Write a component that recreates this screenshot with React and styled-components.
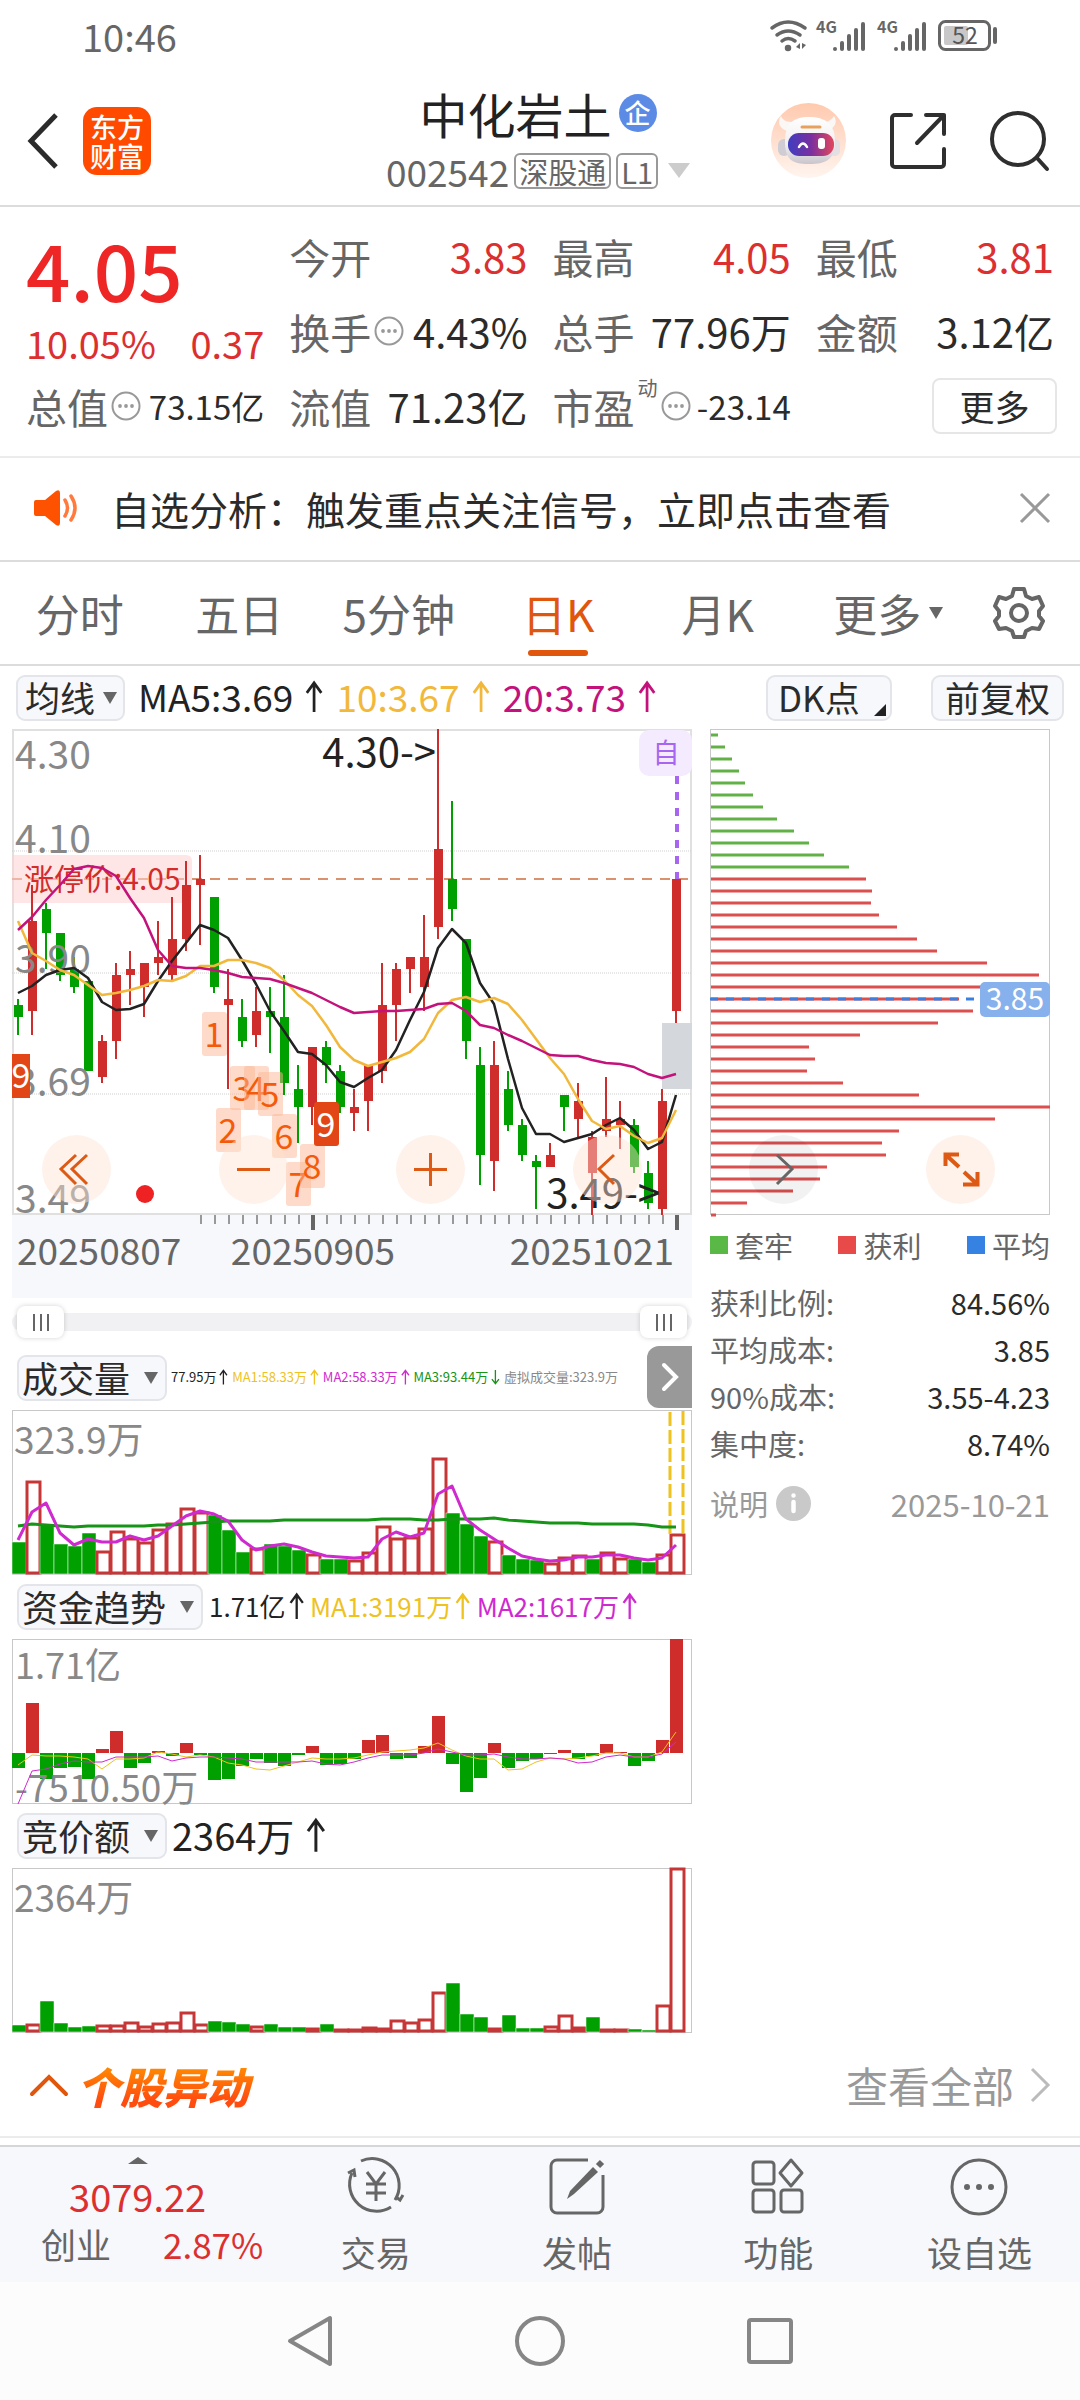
import React, { useState } from 'react';
import styled, { createGlobalStyle } from 'styled-components';

const RED = '#cf2c2c';
const GREEN = '#00a000';
const STEP = 14;
const FONT = '"Noto Sans CJK SC", "Noto Sans", sans-serif';

const GlobalStyle = createGlobalStyle`
  * { box-sizing: border-box; }
  body {
    margin: 0;
    background: #fff;
    color: #2b2b2b;
    font-family: ${FONT};
  }
  button, select, input { font-family: inherit; color: inherit; margin: 0; }
  button { border: 0; padding: 0; background: none; }
  svg { display: block; flex: none; overflow: visible; }
  a { color: inherit; text-decoration: none; }
`;

const Page = styled.div`
  min-height: 100vh;
  display: flex;
  flex-direction: column;
`;

/* ---------- status bar ---------- */

const StatusBar = styled.div`
  height: 74px;
  padding: 0 82px 2px;
  display: flex;
  align-items: center;
  justify-content: space-between;
  font-size: 38px;
  line-height: 40px;
  color: #666;
`;

const StatusIcons = styled.div`
  display: flex;
  gap: 8px;
`;

/* ---------- header ---------- */

const Header = styled.header`
  height: 133px;
  padding: 2px 30px 0 26px;
  display: grid;
  grid-template-columns: 1fr auto 1fr;
  align-items: center;
  border-bottom: 2px solid #dcdcdc;
`;

const HeaderSide = styled.div`
  display: flex;
  align-items: center;
  justify-content: ${(p) => (p.$end ? 'flex-end' : 'flex-start')};
  gap: ${(p) => (p.$end ? 43 : 24)}px;
`;

const Logo = styled.a`
  width: 68px;
  height: 68px;
  border-radius: 14px;
  background: #ff4a00;
  color: #fff;
  font-size: 27px;
  font-weight: 500;
  line-height: 29px;
  display: grid;
  place-content: center;
  text-align: center;
`;

const TitleBlock = styled.div`
  display: flex;
  flex-direction: column;
  align-items: center;
`;

const Title = styled.h1`
  margin: 0;
  display: flex;
  align-items: center;
  gap: 7px;
  font-size: 48px;
  font-weight: 400;
  line-height: 60px;
  color: #222;
`;

const Verified = styled.span`
  width: 38px;
  height: 38px;
  border-radius: 50%;
  background: #5c8be6;
  color: #fff;
  font-size: 26px;
  font-weight: 500;
  line-height: 36px;
  text-align: center;
`;

const CodeRow = styled.div`
  display: flex;
  align-items: center;
  gap: 5px;
  font-size: 37px;
  line-height: 56px;
  color: #666;
`;

const Badge = styled.span`
  border: 2px solid #999;
  border-radius: 6px;
  padding: 0 3px;
  font-size: 29px;
  line-height: 32px;
`;

const Caret = styled.span`
  width: 0;
  height: 0;
  border-left: ${(p) => p.$w || 7}px solid transparent;
  border-right: ${(p) => p.$w || 7}px solid transparent;
  ${(p) => (p.$up ? 'border-bottom' : 'border-top')}: ${(p) => p.$h || 12}px solid ${(p) => p.$color || '#666'};
`;

/* ---------- quote ---------- */

const Quote = styled.section`
  padding: 11px 26px 13px;
  display: grid;
  grid-template-columns: repeat(4, 1fr);
  grid-auto-rows: 75px;
  column-gap: 25px;
  border-bottom: 2px solid #ececec;
`;

const PriceCell = styled.div`
  grid-row: span 2;
  display: flex;
  flex-direction: column;
  color: #ee2626;
`;

const Price = styled.div`
  font-size: 78px;
  font-weight: 500;
  line-height: 100px;
`;

const Change = styled.div`
  display: flex;
  justify-content: space-between;
  font-size: 38px;
  line-height: 50px;
  color: #dc3030;
`;

const Stat = styled.dl`
  margin: 0;
  display: flex;
  align-items: center;
  justify-content: space-between;
  white-space: nowrap;

  dt {
    display: flex;
    align-items: center;
    gap: 3px;
    font-size: 41px;
    color: #666;
  }
  dd {
    margin: 0;
    font-size: ${(p) => (p.$small ? 33 : 40)}px;
    color: ${(p) => (p.$up ? '#dc3030' : '#2b2b2b')};
  }
  sup {
    align-self: flex-start;
    font-size: 20px;
    line-height: 24px;
  }
`;

const MoreButton = styled.button`
  justify-self: end;
  align-self: center;
  width: 125px;
  height: 56px;
  margin-right: -3px;
  border: 2px solid #e6e6e6;
  border-radius: 8px;
  font-size: 35px;
  line-height: 50px;
`;

/* ---------- notice ---------- */

const Notice = styled.section`
  height: 104px;
  padding: 0 30px 2px 34px;
  display: flex;
  align-items: center;
  border-bottom: 2px solid #dcdcdc;
  font-size: 39px;

  a { flex: 1; margin-left: 31px; white-space: nowrap; }
`;

/* ---------- tabs ---------- */

const Tabs = styled.nav`
  height: 104px;
  display: grid;
  grid-template-columns: repeat(6, minmax(0, 1fr)) 123px;
  border-bottom: 2px solid #dcdcdc;
`;

const Tab = styled.button`
  position: relative;
  display: flex;
  align-items: center;
  justify-content: center;
  gap: 8px;
  padding-left: ${(p) => (p.$menu ? 22 : 0)}px;
  font-size: 44px;
  color: ${(p) => (p.$active ? '#e0560c' : '#666')};
  white-space: nowrap;

  &::after {
    content: '';
    display: ${(p) => (p.$active ? 'block' : 'none')};
    position: absolute;
    bottom: 8px;
    width: 60px;
    height: 6px;
    border-radius: 3px;
    background: #e0560c;
  }
`;

const GearButton = styled.button`
  display: grid;
  place-items: center;
`;

/* ---------- indicator rows ---------- */

const PickerBox = styled.span`
  position: relative;
  display: inline-flex;

  select {
    appearance: none;
    height: 46px;
    padding: 0 ${(p) => p.$end}px 3px ${(p) => p.$start || 6}px;
    border: 2px solid #e3e5ea;
    border-radius: 9px;
    background: #f7f8fb;
    font-size: ${(p) => p.$size}px;
    line-height: 40px;
  }
  > span, > svg {
    position: absolute;
    right: ${(p) => p.$inset}px;
    top: 17px;
    pointer-events: none;
  }
`;

const TopRow = styled.div`
  height: 63px;
  padding: 0 16px;
  display: flex;
  align-items: center;
  gap: 13px;
`;

const TagButton = styled.button`
  height: 46px;
  padding: 0 12px 3px;
  border: 2px solid #e3e5ea;
  border-radius: 9px;
  background: #f7f8fb;
  font-size: 35px;
  line-height: 40px;
  white-space: nowrap;
`;

const Spacer = styled.div`
  flex: 1;
`;

const RowEnd = styled.div`
  margin-left: auto;
  display: flex;
  gap: 39px;
`;

const Reading = styled.span`
  display: inline-flex;
  align-items: center;
  gap: ${(p) => (p.$size > 30 ? 12 : 3)}px;
  padding-bottom: 3px;
  font-size: ${(p) => p.$size}px;
  color: ${(p) => p.$color || '#222'};
  white-space: nowrap;
`;

const IndicatorRow = styled.div`
  height: 64px;
  padding-left: 5px;
  display: flex;
  align-items: center;
  gap: ${(p) => p.$gap}px;
`;

const NextButton = styled.button`
  margin-left: auto;
  align-self: flex-start;
  width: 45px;
  height: 62px;
  border-radius: 12px 0 0 12px;
  background: #999;
  display: grid;
  place-items: center;
`;

/* ---------- charts ---------- */

const ChartGrid = styled.main`
  padding: 0 30px 0 12px;
  display: grid;
  grid-template-columns: minmax(0, 680fr) minmax(0, 340fr);
  column-gap: 18px;
  align-items: start;
`;

const ChartBox = styled.div`
  position: relative;

  svg { width: 100%; height: auto; }
`;

const ChartTools = styled.div`
  position: absolute;
  left: ${(p) => p.$left}px;
  bottom: 11px;
  display: flex;
  gap: 108px;
`;

const RoundTool = styled.button`
  width: 69px;
  height: 69px;
  border-radius: 50%;
  background: ${(p) => (p.$gray ? 'rgba(0, 0, 0, 0.05)' : 'rgba(253, 226, 211, 0.45)')};
  color: ${(p) => (p.$gray ? '#666' : '#dd5a14')};
  display: grid;
  place-items: center;

  svg { width: 69px; height: 69px; }
`;

const RangeBox = styled.div`
  height: 48px;
  display: grid;
  align-items: center;
`;

const RangeTrack = styled.div`
  grid-area: 1 / 1;
  height: 18px;
  border-radius: 9px;
  background: #f1f1f3;
`;

const RangeInput = styled.input`
  grid-area: 1 / 1;
  appearance: none;
  height: 32px;
  margin: 0 5px;
  background: none;
  pointer-events: none;

  &::-webkit-slider-thumb {
    appearance: none;
    pointer-events: auto;
    width: 47px;
    height: 32px;
    border-radius: 8px;
    box-shadow: 0 0 5px rgba(0, 0, 0, 0.18);
    background:
      linear-gradient(90deg, #666 2px, transparent 2px 7px, #666 7px 9px, transparent 9px 14px, #666 14px 16px)
      center / 16px 17px no-repeat,
      #fff;
  }
`;

const Legend = styled.div`
  height: 60px;
  display: flex;
  align-items: center;
  justify-content: space-between;
  color: #666;
  font-size: 29px;

  span { display: flex; align-items: center; gap: 7px; }
  i { width: 18px; height: 18px; background: var(--dot); }
`;

const LegendItem = styled.span`
  --dot: ${(p) => p.$color};
`;

const CostTable = styled.table`
  width: 100%;
  margin-top: 3px;
  margin-bottom: 2px;
  border-collapse: collapse;
  font-size: 29px;

  tr { height: 47px; }
  th, td { padding: 0; line-height: 44px; font-weight: 400; white-space: nowrap; }
  th { text-align: left; color: #666; }
  td { text-align: right; }
`;

const Footnote = styled.div`
  height: 70px;
  display: flex;
  align-items: center;
  gap: 8px;
  font-size: 29px;
  color: #999;

  time { margin-left: auto; font-size: 31px; }
`;

const InfoButton = styled.button`
  width: 35px;
  height: 35px;
`;

/* ---------- section + bottom ---------- */

const MoveSection = styled.section`
  height: 105px;
  padding: 0 30px;
  display: flex;
  align-items: center;
  border-bottom: 2px solid #ececec;

  h2 {
    margin: 0 0 0 9px;
    padding-right: 8px;
    font-size: 43px;
    font-weight: 900;
    font-style: italic;
    line-height: 60px;
    background: linear-gradient(#ff8a00 20%, #ff4d10 75%);
    background-clip: text;
    color: transparent;
  }
  a {
    margin-left: auto;
    display: flex;
    align-items: center;
    gap: 16px;
    font-size: 42px;
    color: #999;
  }
`;

const BottomBar = styled.nav`
  margin-top: 7px;
  height: 137px;
  display: grid;
  grid-template-columns: 275fr repeat(4, 201fr);
  background: #f7f8fb;
  border-top: 2px solid #d4d6da;
`;

const IndexCell = styled.button`
  padding-top: 10px;
  display: flex;
  flex-direction: column;
  align-items: center;
  font-size: 38px;
  line-height: 50px;
  color: #dc3030;

  b { font-weight: 400; margin-top: 7px; }
  div {
    align-self: stretch;
    padding: 0 12px 0 41px;
    display: flex;
    justify-content: space-between;
    font-size: 35px;
    line-height: 46px;
  }
  em { font-style: normal; color: #666; }
`;

const NavButton = styled.button`
  padding-top: 8px;
  display: flex;
  flex-direction: column;
  align-items: center;
  gap: 9px;
  font-size: 35px;
  line-height: 52px;
  color: #666;
`;

const SystemNav = styled.div`
  flex: 1;
  min-height: 118px;
  display: flex;
  justify-content: center;
  align-items: center;
  gap: 170px;
  background: #fcfcfc;
`;

/* ---------- data, prices in cents: [open side, close side, high, low] ---------- */

const candles = [
  ['g', 384, 382, 385, 379], ['r', 398, 383, 404, 379], ['g', 400, 396, 401, 390], ['g', 396, 389, 396, 388],
  ['g', 390, 387, 392, 386], ['g', 388, 373, 388, 373], ['r', 378, 372, 379, 371], ['r', 389, 378, 391, 375],
  ['r', 390, 389, 393, 384], ['r', 391, 387, 391, 382], ['r', 392, 391, 398, 389], ['r', 395, 389, 402, 388],
  ['r', 404, 395, 408, 393], ['r', 405, 404, 409, 394], ['g', 402, 387, 402, 386], ['r', 385, 384, 390, 370],
  ['g', 382, 378, 385, 377], ['r', 383, 379, 387, 377], ['g', 383, 382, 387, 376], ['g', 382, 371, 389, 369],
  ['g', 370, 367, 374, 361], ['r', 377, 367, 377, 364], ['g', 377, 374, 378, 371], ['g', 373, 367, 374, 366],
  ['r', 367, 366, 370, 363], ['r', 374, 368, 374, 363], ['r', 384, 373, 391, 371], ['r', 390, 384, 391, 378],
  ['r', 392, 390, 392, 386], ['r', 392, 387, 399, 383], ['r', 410, 397, 430, 395], ['g', 405, 400, 418, 398],
  ['g', 395, 378, 395, 375], ['g', 374, 359, 377, 354], ['r', 374, 358, 378, 353], ['g', 370, 364, 373, 363],
  ['g', 364, 359, 365, 358], ['g', 358, 357, 359, 350], ['r', 359, 357, 361, 357], ['g', 369, 367, 369, 363],
  ['r', 368, 365, 371, 362], ['r', 362, 356, 363, 349], ['r', 365, 363, 372, 362], ['r', 365, 364, 368, 360],
  ['g', 364, 357, 365, 356], ['g', 356, 351, 358, 350], ['r', 368, 350, 370, 349], ['r', 405, 383, 405, 381],
];

const ma5 = [264, 257, 246, 241, 239, 249, 273, 281, 280, 275, 252, 232, 214, 196, 201, 209, 231, 255, 282, 302, 323, 325, 336, 353, 358, 349, 341, 321, 291, 263, 219, 200, 214, 254, 275, 330, 379, 405, 405, 413, 409, 405, 396, 389, 401, 420, 413, 366];
const ma10 = [192, 224, 232, 241, 246, 256, 266, 264, 261, 257, 251, 252, 247, 237, 237, 231, 231, 234, 239, 251, 266, 277, 296, 318, 331, 337, 333, 329, 323, 310, 284, 271, 268, 273, 269, 275, 291, 310, 329, 345, 370, 392, 400, 397, 407, 414, 409, 381];
const ma20 = [201, 188, 171, 156, 140, 137, 139, 147, 169, 189, 221, 237, 239, 239, 241, 244, 248, 249, 250, 254, 259, 264, 271, 278, 284, 283, 282, 282, 281, 280, 275, 274, 282, 296, 299, 306, 312, 319, 326, 327, 327, 331, 334, 335, 338, 345, 349, 345];

const marks = [
  [14, 1, 283], [15, 2, 379], [16, 3, 337], [17, 4, 337], [18, 5, 343], [19, 6, 385], [20, 7, 433], [21, 8, 415],
];

// bar heights; one letter per bar: r = hollow red, g = solid green
const volumeColors = 'grggggrrrrrrrrgggrgggrggrrrrrrrgggrgggrrrgrrggrr';
const volume = [32, 93, 50, 30, 28, 41, 23, 43, 36, 32, 45, 51, 66, 62, 59, 44, 22, 26, 30, 28, 24, 20, 15, 15, 14, 22, 48, 36, 37, 46, 116, 61, 50, 38, 33, 19, 15, 14, 11, 17, 19, 15, 22, 16, 15, 12, 20, 40];
const volumePink = [130, 102, 93, 123, 135, 129, 132, 132, 126, 130, 126, 116, 106, 101, 104, 111, 130, 140, 136, 134, 137, 142, 146, 147, 148, 147, 129, 122, 127, 123, 84, 76, 109, 120, 129, 138, 146, 149, 151, 150, 147, 147, 145, 145, 148, 150, 148, 135];
const volumeGreen = [116, 114, 115, 116, 117, 116, 116, 116, 116, 116, 115, 115, 114, 113, 112, 111, 111, 111, 111, 110, 110, 110, 110, 110, 110, 110, 109, 109, 109, 110, 110, 109, 109, 109, 108, 110, 111, 112, 113, 113, 113, 114, 114, 114, 114, 115, 117, 117];

const capital = [-15, 50, -26, -15, -14, -26, 4, 22, -15, -10, 2, -3, 10, -2, -27, -26, -13, -6, -10, -13, -2, 7, -12, -11, -6, 13, 18, -6, -5, 7, 37, -11, -39, -25, 10, -15, -8, -6, -1, 3, -6, -3, 9, 1, -13, -8, 13, 114];
const capitalYellow = [126, 116, 117, 117, 118, 120, 130, 120, 120, 119, 113, 115, 118, 116, 118, 124, 126, 130, 131, 127, 123, 119, 120, 120, 119, 116, 113, 112, 111, 109, 104, 111, 117, 120, 120, 131, 130, 123, 119, 120, 119, 117, 114, 114, 118, 118, 113, 93];
const capitalPink = [165, 132, 130, 125, 122, 123, 123, 118, 118, 118, 117, 122, 119, 118, 118, 119, 120, 123, 123, 123, 123, 122, 125, 126, 123, 119, 116, 116, 116, 114, 110, 113, 116, 116, 115, 118, 120, 120, 119, 120, 124, 123, 118, 116, 118, 118, 115, 103];

const bidColors = 'grggggrrrrrrrrgggrgggrgrrrrrrrrgggrgggrrrgrrggrr';
const bid = [7, 8, 31, 9, 5, 6, 7, 7, 10, 6, 9, 10, 20, 8, 11, 10, 8, 6, 8, 5, 5, 4, 8, 3, 3, 5, 4, 12, 10, 13, 40, 49, 18, 15, 4, 17, 4, 4, 6, 17, 5, 15, 3, 3, 3, 2, 27, 164];

const chips = [7, 14, 21, 28, 34, 42, 52, 66, 83, 98, 113, 138, 155, 161, 160, 168, 186, 206, 226, 276, 328, 275, 248, 262, 227, 149, 98, 104, 96, 132, 208, 339, 284, 188, 171, 175, 116, 109, 82, 36, 5];

const cx = (i) => 6 + i * STEP;
const priceY = (cents) => Math.round((430 - cents) * 6);
const points = (list) => list.map((y, i) => `${cx(i)},${y}`).join(' ');

/* ---------- drawings ---------- */

const Up = ({ size, down }) => (
  <svg width={size * 0.55} height={size} viewBox="0 0 20 36" fill="none" stroke="currentColor" strokeWidth="3">
    <path d={down ? 'M10 2v31M2 23l8 10 8-10' : 'M10 35V4M2 14l8-11 8 11'} />
  </svg>
);

const Dots = () => (
  <svg width="30" height="30" viewBox="0 0 30 30">
    <circle cx="15" cy="15" r="13.5" fill="none" stroke="#999" strokeWidth="2" />
    {[9, 15, 21].map((x) => <circle key={x} cx={x} cy="15" r="1.9" fill="#999" />)}
  </svg>
);

const Signal = () => (
  <svg width="53" height="34" viewBox="0 0 53 34">
    <text x="0" y="14" fontSize="16" fontWeight="700" fill="#666">4G</text>
    {[[19, 30], [26, 24], [33, 17], [40, 11], [47, 5]].map(([x, y]) => (
      <path key={x} d={`M${x} ${y}V30`} stroke="#666" strokeWidth="4" strokeLinecap="round" />
    ))}
  </svg>
);

const Robot = () => (
  <svg width="75" height="75" viewBox="0 0 75 75">
    <defs>
      <linearGradient id="peach" x2="0" y2="1"><stop stopColor="#ffc9ae" /><stop offset="1" stopColor="#fff5ef" /></linearGradient>
      <linearGradient id="visor"><stop stopColor="#3f3dc0" /><stop offset=".5" stopColor="#7a2f9f" /><stop offset="1" stopColor="#e2475c" /></linearGradient>
      <linearGradient id="shell" x2="0" y2="1"><stop stopColor="#fff" /><stop offset=".6" stopColor="#f1eef0" /><stop offset="1" stopColor="#c9c5cc" /></linearGradient>
    </defs>
    <circle cx="37.5" cy="37.5" r="37.5" fill="url(#peach)" />
    <path d="M16 28c-8-3-10-9-6-15 2 5 6 6 13 6zM56 28c8-3 11-9 7-15-3 5-7 6-13 6z" fill="#fbf7f5" />
    <rect x="7" y="36" width="12" height="17" rx="6" fill="#cfccd4" />
    <rect x="58" y="36" width="11" height="17" rx="5" fill="#e3dfe3" />
    <path d="M14 38c0-17 8-24 24-24s26 7 26 24c0 18-8 23-26 23S14 56 14 38z" fill="url(#shell)" />
    <rect x="17" y="30" width="46" height="23" rx="11" fill="url(#visor)" />
    <path d="M31 24h18" stroke="#e8a15c" strokeWidth="3" strokeLinecap="round" />
    <path d="M28 44q4-7 8 0" fill="none" stroke="#fff" strokeWidth="2.5" strokeLinecap="round" />
    <rect x="47" y="35" width="7" height="11" rx="3" fill="#fff" />
  </svg>
);

const KLineChart = () => (
  <svg viewBox="0 0 680 486" fontFamily={FONT} role="img" aria-label="日K">
    <rect x="1" y="1" width="678" height="484" fill="#fff" stroke="#e0e0e0" strokeWidth="2" />
    {[122, 244, 365].map((y) => (
      <path key={y} d={`M0 ${y}H680`} stroke="#cfcfcf" strokeDasharray="1 1" />
    ))}
    <rect x="650" y="294" width="30" height="66" fill="#d4d7dc" />
    <path d="M0 150H676" stroke="#d9916e" strokeWidth="2" strokeDasharray="10 8" />
    <path d="M0 126H174q6 0 6 6v36q0 6-6 6H0z" fill="#ffd2d2" fillOpacity="0.55" />
    {candles.map(([c, top, bottom, high, low], i) => (
      <g key={i} fill={c === 'r' ? RED : GREEN}>
        <rect x={cx(i) - 1} y={priceY(high)} width="2" height={Math.max(priceY(low) - priceY(high), 1)} />
        <rect x={cx(i) - 4} y={priceY(top)} width="9" height={priceY(bottom) - priceY(top)} />
      </g>
    ))}
    <g fontSize="39" fill="#888">
      <text x="3" y="40">4.30</text>
      <text x="3" y="124">4.10</text>
      <text x="3" y="244">3.90</text>
      <text x="3" y="367">3.69</text>
      <text x="3" y="484">3.49</text>
    </g>
    <text x="12" y="161" fontSize="30" fill="#d42b2b">涨停价:4.05</text>
    {marks.map(([i, n, y]) => (
      <g key={n}>
        <rect x={cx(i) - 12} y={y} width="25" height="44" rx="3" fill="#fbb594" fillOpacity="0.5" />
        <text x={cx(i)} y={y + 35} fontSize="34" textAnchor="middle" fill="#f55a0a">{n}</text>
      </g>
    ))}
    <rect x="0" y="325" width="18" height="44" fill="#e24516" />
    <rect x={cx(22) - 12} y="373" width="25" height="44" rx="3" fill="#e24516" />
    <g fontSize="34" fill="#fff" textAnchor="middle">
      <text x="9" y="359">9</text>
      <text x={cx(22)} y="408">9</text>
    </g>
    <g fill="none" strokeWidth="2.5" strokeLinejoin="round">
      <polyline points={points(ma5)} stroke="#222" />
      <polyline points={points(ma10)} stroke="#f2b83c" />
      <polyline points={points(ma20)} stroke="#c4127c" />
    </g>
    <circle cx="133" cy="465" r="9" fill="#ee2222" />
    <g fontSize="40" fill="#222" textAnchor="end">
      <text x="424" y="38">4.30-&gt;</text>
      <text x="648" y="479">3.49-&gt;</text>
    </g>
    <path d="M665 47V150" stroke="#a866f0" strokeWidth="4" strokeDasharray="8 8" />
    <rect x="627" y="1" width="53" height="46" rx="10" fill="#f4ebfe" />
    <text x="654" y="34" fontSize="27" textAnchor="middle" fill="#a866f0">自</text>
  </svg>
);

const DateAxis = () => (
  <svg viewBox="0 0 680 83" fontFamily={FONT} role="img" aria-label="日期">
    <rect width="680" height="83" fill="#f7f8fb" />
    {candles.map((_, i) => {
      if (i < 13) return null;
      const major = i === 21 || i === 47;
      return <path key={i} d={`M${cx(i) + 1} 0V${major ? 15 : 9}`} stroke={major ? '#666' : '#999'} strokeWidth={major ? 4 : 2} />;
    })}
    <g fontSize="37" fill="#666">
      <text x="5" y="50">20250807</text>
      <text x="301" y="50" textAnchor="middle">20250905</text>
      <text x="662" y="50" textAnchor="end">20251021</text>
    </g>
  </svg>
);

const Bar = ({ i, h, color, base }) =>
  color === 'r' ? (
    <rect x={cx(i) - 5} y={base - h + 1} width="13" height={Math.max(h - 2, 1)} fill="#fff" stroke="#c63636" strokeWidth="3" />
  ) : (
    <rect x={cx(i) - 6} y={base - h} width="14" height={h} fill={GREEN} stroke="#fff" strokeWidth="0.5" />
  );

const Frame = () => <rect x="0.5" y="0.5" width="679" height="164" fill="none" stroke="#c8c8c8" />;

const VolumeChart = () => (
  <svg viewBox="0 0 680 165" fontFamily={FONT} role="img" aria-label="成交量">
    <Frame />
    {volume.map((h, i) => <Bar key={i} i={i} h={h} color={volumeColors[i]} base={164} />)}
    <path d="M658 124V1M671 1V124" fill="none" stroke="#eec21f" strokeWidth="3" strokeDasharray="14 4" />
    <g fill="none" strokeWidth="3" strokeLinejoin="round">
      <polyline points={points(volumeGreen)} stroke="#159415" />
      <polyline points={points(volumePink)} stroke="#cf2acf" />
    </g>
    <text x="2" y="44" fontSize="37" fill="#888">323.9万</text>
  </svg>
);

const CapitalChart = () => (
  <svg viewBox="0 0 680 165" fontFamily={FONT} role="img" aria-label="资金趋势">
    <Frame />
    {capital.map((v, i) => (
      <rect key={i} x={cx(i) - 6} y={v > 0 ? 114 - v : 114} width="13" height={Math.abs(v)} fill={v > 0 ? RED : GREEN} />
    ))}
    <text x="3" y="40" fontSize="36" fill="#888">1.71亿</text>
    <text x="3" y="163" fontSize="37" fill="#888">-7510.50万</text>
    <g fill="none" strokeWidth="1">
      <polyline points={points(capitalYellow)} stroke="#eec21f" />
      <polyline points={points(capitalPink)} stroke="#cf2acf" />
    </g>
  </svg>
);

const BidChart = () => (
  <svg viewBox="0 0 680 165" fontFamily={FONT} role="img" aria-label="竞价额">
    <Frame />
    {bid.map((h, i) => <Bar key={i} i={i} h={h} color={bidColors[i]} base={164} />)}
    <text x="2" y="44" fontSize="37" fill="#888">2364万</text>
  </svg>
);

const ChipChart = () => (
  <svg viewBox="0 0 340 486" fontFamily={FONT} role="img" aria-label="筹码分布">
    <rect x="0.5" y="0.5" width="339" height="485" fill="#fff" stroke="#c8c8c8" />
    {chips.map((w, i) => (
      <path key={i} d={`M1 ${6 + i * 12}h${w}`} stroke={i < 12 ? '#62b146' : '#db4f4f'} strokeWidth="3" />
    ))}
    <path d="M0 270H264" stroke="#3a80e0" strokeWidth="3" strokeDasharray="8 8" />
    <rect x="270" y="253" width="70" height="35" rx="5" fill="#86b1ec" />
    <text x="305" y="281" fontSize="30" fill="#fff" textAnchor="middle">3.85</text>
  </svg>
);

const toolPaths = {
  fast: 'M34 20L19 34l15 15M45 20L30 34l15 15',
  minus: 'M18 34.500h33',
  plus: 'M18 34.500h33M34.500 18v33',
  prev: 'M41 20L26 34l15 15',
  next: 'M28 20l15 14-15 15',
  expand: 'M19.500 31V19.500H33M20 20l13 12M51.500 37v12.500H37M51 49L38 37',
};

const Tool = ({ name, label, gray }) => (
  <RoundTool type="button" aria-label={label} $gray={gray}>
    <svg viewBox="0 0 69 69" fill="none" stroke="currentColor" strokeWidth={name === 'expand' ? 4 : 3}>
      <path d={toolPaths[name]} />
    </svg>
  </RoundTool>
);

const Picker = ({ label, size = 36, start = 3, end = 34, inset = 9, corner }) => (
  <PickerBox $size={size} $start={start} $end={end} $inset={inset}>
    <select aria-label={label} defaultValue={label}>
      <option>{label}</option>
    </select>
    {corner ? (
      <svg width="12" height="24" viewBox="0 0 12 24"><path d="M12 12v12H0z" fill="#222" /></svg>
    ) : (
      <Caret />
    )}
  </PickerBox>
);

const tabs = ['分时', '五日', '5分钟', '日K', '月K', '更多'];

const stats = [
  { label: '今开', value: '3.83', up: true },
  { label: '最高', value: '4.05', up: true },
  { label: '最低', value: '3.81', up: true },
  { label: '换手', value: '4.43%', hint: true },
  { label: '总手', value: '77.96万' },
  { label: '金额', value: '3.12亿' },
  { label: '总值', value: '73.15亿', hint: true, small: true },
  { label: '流值', value: '71.23亿' },
  { label: '市盈', value: '-23.14', hint: true, small: true, sup: '动' },
];

const costs = [
  ['获利比例:', '84.56%'],
  ['平均成本:', '3.85'],
  ['90%成本:', '3.55-4.23'],
  ['集中度:', '8.74%'],
];

const navItems = [
  {
    label: '交易',
    icon: (
      <>
        <path d="M16 6a27 27 0 0 1 34 39M46 52A27 27 0 0 1 7 18M3 18l6-3 1 7M58 40l-3 5-4-3" />
        <path d="M22 17l9 12 9-12M31 29v17M21 29h20M21 38h20" />
      </>
    ),
  },
  {
    label: '发帖',
    icon: (
      <>
        <path d="M42 5H11a6 6 0 0 0-6 6v41a6 6 0 0 0 6 6h40a6 6 0 0 0 6-6V20" />
        <path d="M47 12l5 5-24 22-7 5 3-8z" fill="#666" stroke="none" />
        <path d="M52 11l4-4" strokeWidth="6" />
      </>
    ),
  },
  {
    label: '功能',
    icon: (
      <>
        <rect x="6" y="7" width="21" height="22" rx="3" />
        <path d="M44 5l11 13-11 13-11-13z" strokeLinejoin="round" />
        <rect x="6" y="35" width="21" height="22" rx="3" />
        <rect x="34" y="35" width="21" height="22" rx="3" />
      </>
    ),
  },
  {
    label: '设自选',
    icon: (
      <>
        <circle cx="31" cy="32" r="27" />
        {[19, 31, 43].map((x) => <circle key={x} cx={x} cy="32" r="1.500" />)}
      </>
    ),
  },
];

const App = () => {
  const [active, setActive] = useState('日K');
  const [range, setRange] = useState([0, 100]);

  return (
    <Page>
      <GlobalStyle />

      <StatusBar>
        <span>10:46</span>
        <StatusIcons>
          <svg width="38" height="34" viewBox="0 0 38 34" fill="none" stroke="#666" strokeWidth="3.500" strokeLinecap="round">
            <path d="M2 9q16-12 33 0M7 16q11-8 23 0M12 22q6-5 13 0" />
            <circle cx="18" cy="29" r="1.500" fill="#666" />
            <path d="M26 28l4-4v6zM32 24l4 2-4 4z" fill="#666" stroke="none" />
          </svg>
          <Signal />
          <Signal />
          <svg width="60" height="34" viewBox="0 0 60 34">
            <rect x="1.500" y="2.500" width="50" height="28" rx="6" fill="none" stroke="#666" strokeWidth="3" />
            <rect x="6" y="7" width="24" height="19" rx="2" fill="#c8c8c8" />
            <path d="M57 10v13" stroke="#666" strokeWidth="4" strokeLinecap="round" />
            <text x="27" y="25" fontSize="23" textAnchor="middle" fill="#555">52</text>
          </svg>
        </StatusIcons>
      </StatusBar>

      <Header>
        <HeaderSide>
          <button type="button" aria-label="返回">
            <svg width="33" height="56" viewBox="0 0 33 56" fill="none" stroke="#2b2b2b" strokeWidth="5">
              <path d="M30 2L5 28l25 26" />
            </svg>
          </button>
          <Logo href="#home">东方<br />财富</Logo>
        </HeaderSide>
        <TitleBlock>
          <Title>中化岩土<Verified>企</Verified></Title>
          <CodeRow>
            002542
            <Badge>深股通</Badge>
            <Badge>L1</Badge>
            <Spacer />
            <Caret $w={11} $h={15} $color="#ccc" />
          </CodeRow>
        </TitleBlock>
        <HeaderSide $end>
          <button type="button" aria-label="助手"><Robot /></button>
          <button type="button" aria-label="分享">
            <svg width="58" height="58" viewBox="0 0 58 58" fill="none" stroke="#2f2f2f" strokeWidth="4" strokeLinecap="round" strokeLinejoin="round">
              <path d="M22 3H6a3 3 0 0 0-3 3v46a3 3 0 0 0 3 3h46a3 3 0 0 0 3-3V37M37 3h18v19M55 3L28 31" />
            </svg>
          </button>
          <button type="button" aria-label="搜索">
            <svg width="60" height="60" viewBox="0 0 60 60" fill="none" stroke="#2f2f2f" strokeWidth="4" strokeLinecap="round">
              <circle cx="28" cy="28" r="26" />
              <path d="M47 47l10 11" />
            </svg>
          </button>
        </HeaderSide>
      </Header>

      <Quote>
        <PriceCell>
          <Price>4.05</Price>
          <Change><span>10.05%</span><span>0.37</span></Change>
        </PriceCell>
        {stats.map((s) => (
          <Stat key={s.label} $up={s.up} $small={s.small}>
            <dt>{s.label}{s.sup && <sup>{s.sup}</sup>}{s.hint && <Dots />}</dt>
            <dd>{s.value}</dd>
          </Stat>
        ))}
        <MoreButton type="button">更多</MoreButton>
      </Quote>

      <Notice>
        <svg width="46" height="38" viewBox="0 0 46 38">
          <path d="M2 11h9L22 2q4-2 4 2v30q0 4-4 2l-11-9H2q-2 0-2-2V13q0-2 2-2z" fill="#ff5200" />
          <path d="M31 11q5 8 0 16M37 7q8 12 0 24" fill="none" stroke="#ff7a3c" strokeWidth="3.500" strokeLinecap="round" />
        </svg>
        <a href="#signal">自选分析：触发重点关注信号，立即点击查看</a>
        <button type="button" aria-label="关闭">
          <svg width="30" height="30" viewBox="0 0 30 30" stroke="#999" strokeWidth="3"><path d="M1 1l28 28M29 1L1 29" /></svg>
        </button>
      </Notice>

      <Tabs>
        {tabs.map((t) => (
          <Tab key={t} type="button" $active={t === active} $menu={t === '更多'} onClick={() => setActive(t)}>
            {t}
            {t === '更多' && <Caret />}
          </Tab>
        ))}
        <GearButton type="button" aria-label="设置">
          <svg width="52" height="52" viewBox="0 0 52 52" fill="none" stroke="#666" strokeWidth="4" strokeLinejoin="round">
            <path d="M21 2h10l2 7 6 3 7-2 4 9-4 5v5l4 5-4 8-7-1-6 3-2 6H21l-2-6-6-3-7 1-4-8 4-5v-5l-4-5 4-9 7 2 6-3z" />
            <circle cx="26" cy="26" r="8" />
          </svg>
        </GearButton>
      </Tabs>

      <TopRow>
        <Picker label="均线" size={35} start={7} end={27} inset={8} />
        <Reading $size={37}>MA5:3.69<Up size={33} /></Reading>
        <Reading $size={37} $color="#f2b83c">10:3.67<Up size={33} /></Reading>
        <Reading $size={37} $color="#c4127c">20:3.73<Up size={33} /></Reading>
        <RowEnd>
          <Picker label="DK点" size={35} start={10} end={30} inset={6} corner />
          <TagButton type="button">前复权</TagButton>
        </RowEnd>
      </TopRow>

      <ChartGrid>
        <div>
          <ChartBox>
            <KLineChart />
            <ChartTools $left={30}>
              <Tool name="fast" label="快退" />
              <Tool name="minus" label="缩小" />
              <Tool name="plus" label="放大" />
              <Tool name="prev" label="左移" />
            </ChartTools>
          </ChartBox>
          <ChartBox><DateAxis /></ChartBox>
          <RangeBox>
            <RangeTrack />
            <RangeInput type="range" aria-label="开始" value={range[0]} onChange={(e) => setRange([+e.target.value, range[1]])} />
            <RangeInput type="range" aria-label="结束" value={range[1]} onChange={(e) => setRange([range[0], +e.target.value])} />
          </RangeBox>

          <IndicatorRow $gap={4}>
            <Picker label="成交量" />
            <Reading $size={13}>77.95万<Up size={16} /></Reading>
            <Reading $size={13} $color="#eec21f">MA1:58.33万<Up size={16} /></Reading>
            <Reading $size={13} $color="#cf2acf">MA2:58.33万<Up size={16} /></Reading>
            <Reading $size={13} $color="#159415">MA3:93.44万<Up size={16} down /></Reading>
            <Reading $size={13} $color="#888">虚拟成交量:323.9万</Reading>
            <NextButton type="button" aria-label="下一个">
              <svg width="18" height="28" viewBox="0 0 18 28" fill="none" stroke="#fff" strokeWidth="4" strokeLinecap="round"><path d="M3 2l12 12L3 26" /></svg>
            </NextButton>
          </IndicatorRow>
          <ChartBox><VolumeChart /></ChartBox>

          <IndicatorRow $gap={6}>
            <Picker label="资金趋势" />
            <Reading $size={26}>1.71亿<Up size={28} /></Reading>
            <Reading $size={26} $color="#eec21f">MA1:3191万<Up size={28} /></Reading>
            <Reading $size={26} $color="#cf2acf">MA2:1617万<Up size={28} /></Reading>
          </IndicatorRow>
          <ChartBox><CapitalChart /></ChartBox>

          <IndicatorRow $gap={5}>
            <Picker label="竞价额" />
            <Reading $size={38}>2364万<Up size={36} /></Reading>
          </IndicatorRow>
          <ChartBox><BidChart /></ChartBox>
        </div>

        <div>
          <ChartBox>
            <ChipChart />
            <ChartTools $left={39}>
              <Tool name="next" label="右移" gray />
              <Tool name="expand" label="全屏" />
            </ChartTools>
          </ChartBox>
          <Legend>
            <LegendItem $color="#5ab946"><i />套牢</LegendItem>
            <LegendItem $color="#e84a4a"><i />获利</LegendItem>
            <LegendItem $color="#3682e2"><i />平均</LegendItem>
          </Legend>
          <CostTable>
            <tbody>
              {costs.map(([k, v]) => (
                <tr key={k}><th scope="row">{k}</th><td>{v}</td></tr>
              ))}
            </tbody>
          </CostTable>
          <Footnote>
            说明
            <InfoButton type="button" aria-label="说明">
              <svg width="35" height="35" viewBox="0 0 35 35">
                <circle cx="17.500" cy="17.500" r="17.500" fill="#c9c9c9" />
                <path d="M17.500 9.500v.1M17.500 16v9" stroke="#fff" strokeWidth="4.500" strokeLinecap="round" />
              </svg>
            </InfoButton>
            <time dateTime="2025-10-21">2025-10-21</time>
          </Footnote>
        </div>
      </ChartGrid>

      <MoveSection>
        <svg width="38" height="22" viewBox="0 0 38 22" fill="none" stroke="#e0560c" strokeWidth="4" strokeLinecap="round"><path d="M2 20L19 3l17 17" /></svg>
        <h2>个股异动</h2>
        <a href="#all">
          查看全部
          <svg width="20" height="36" viewBox="0 0 20 36" fill="none" stroke="#bbb" strokeWidth="3"><path d="M2 2l16 16L2 34" /></svg>
        </a>
      </MoveSection>

      <BottomBar>
        <IndexCell type="button">
          <Caret $up $w={10} $h={7} />
          <b>3079.22</b>
          <div><em>创业</em><span>2.87%</span></div>
        </IndexCell>
        {navItems.map((n) => (
          <NavButton key={n.label} type="button">
            <svg width="62" height="62" viewBox="0 0 62 62" fill="none" stroke="#666" strokeWidth="3">{n.icon}</svg>
            {n.label}
          </NavButton>
        ))}
      </BottomBar>

      <SystemNav>
        <button type="button" aria-label="后退">
          <svg width="60" height="60" viewBox="0 0 60 60" fill="none" stroke="#868686" strokeWidth="4" strokeLinejoin="round"><path d="M50 7v46L10 30z" /></svg>
        </button>
        <button type="button" aria-label="主页">
          <svg width="60" height="60" viewBox="0 0 60 60" fill="none" stroke="#868686" strokeWidth="4"><circle cx="30" cy="30" r="23" /></svg>
        </button>
        <button type="button" aria-label="最近任务">
          <svg width="60" height="60" viewBox="0 0 60 60" fill="none" stroke="#868686" strokeWidth="4"><rect x="9" y="9" width="42" height="42" rx="2" /></svg>
        </button>
      </SystemNav>
    </Page>
  );
};

export default App;
